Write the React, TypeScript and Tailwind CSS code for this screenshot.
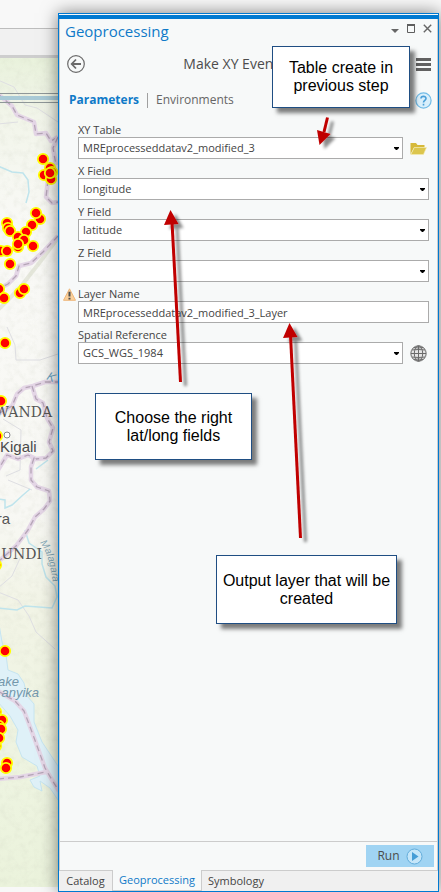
import type { ReactNode } from "react";

const TOOL_FONT = "font-['Open_Sans','Noto_Sans',sans-serif]";
const NOTE_FONT = "font-['Liberation_Sans',Arial,sans-serif]";
const SERIF_FONT = "font-['DejaVu_Serif',serif]";

const SITES: [number, number][] = [
  [43, 159], [50, 168], [44, 175], [51, 179], [52, 172], [50, 173],
  [40, 219], [36, 213], [32, 225], [7, 223], [8, 228], [10, 231], [26, 232],
  [18, 237], [24, 240], [18, 247], [18, 244], [1, 251], [7, 251], [33, 246], [10, 264],
  [-1, 289], [20, 293], [24, 289], [4, 298], [5, 343], [1, 401], [-3, 436],
  [-4, 565], [5, 651], [-4, 712], [2, 720], [-1, 726], [1, 729], [-1, 738], [-4, 746],
  [7, 763], [6, 768],
];

const BORDER_PATHS = [
  "M-2 94 L12 106 L17 115 L34 122 L36 134 L46 133 L51 141 L58 137",
  "M58 137 L53 148 L56 165 M48 180 L46 197 L52 203 L58 202",
  "M58 236 L43 252 L31 263 L19 266 L16 276 L8 284 L-2 289",
  "M-2 414 L12 406 L17 394 L24 388 L33 386 L45 382 L58 382",
  "M32 386 L36 399 L43 403 L47 418 L53 428 L49 442 L53 451 L46 458 L36 459 L28 455 L18 459 L7 455 L-2 470",
  "M34 458 L31 467 L31 480 L37 487 L49 491 L50 501 L44 509 L35 517 L28 530 L16 546 L-2 562",
  "M-2 691 L15 701 L24 711 L29 724 L36 743 L45 768 L52 780 L59 791 M-2 779 L20 777 L46 772",
];

const RIVER_PATHS = [
  "M-2 166 L12 172 L23 173 L28 180 L29 192 L26 203",
  "M-2 499 L5 500 L5 508 L12 505 L23 495 L30 489",
  "M36 469 L44 463 L48 460",
  "M25 530 L29 543 L42 552 L42 564 L46 577 L55 586 L57 597 L52 608 L25 606 L17 610 L-2 608",
];

function TerrainMap() {
  return (
    <svg
      className="block w-full flex-1 min-h-0"
      viewBox="0 58 58 829"
      preserveAspectRatio="xMinYMin slice"
      role="img"
      aria-label="Map of survey sites"
    >
      <defs>
        <linearGradient id="land" x1="0" y1="0" x2="0" y2="1">
          <stop offset="0" stopColor="#e9f2dc" />
          <stop offset="0.07" stopColor="#f2f5ea" />
          <stop offset="0.2" stopColor="#f9f9f6" />
          <stop offset="0.55" stopColor="#f8f8f4" />
          <stop offset="0.66" stopColor="#f2f4e6" />
          <stop offset="0.84" stopColor="#eef4e1" />
          <stop offset="1" stopColor="#ebf3dc" />
        </linearGradient>
        <filter id="relief" x="0" y="0" width="1" height="1">
          <feTurbulence type="fractalNoise" baseFrequency="0.14" numOctaves="4" seed="7" />
          <feColorMatrix values="0 0 0 0 0.55  0 0 0 0 0.57  0 0 0 0 0.47  0.9 0 0 0 -0.38" />
        </filter>
      </defs>
      <rect y="58" width="58" height="829" fill="url(#land)" />
      <path d="M-2 310 L8 300 L22 285 L40 262 L58 238" stroke="#d8dccb" strokeWidth="4" fill="none" opacity="0.6" />
      <rect y="58" width="58" height="829" filter="url(#relief)" opacity="0.4" />
      <path
        d="M-2 618 L2 642 L6 655 L8 670 L18 674 L24 683 L27 696 L34 704 L34 722 L42 742 L58 766 V800 L50 788 L40 781 L42 791 L34 787 L30 780 L40 776 L37 766 L22 757 L16 742 L18 730 L10 716 L-2 702 Z"
        fill="#dff1f8"
        stroke="#c6e5f1"
      />
      <path d="M-2 80 L14 87 L25 105 L37 108 L58 122 M-2 124 L18 122 M7 327 L15 345 L16 360 L40 360 L58 354 M3 419 L21 430 L20 470 L6 476 M32 490 L8 480 M-2 588 L12 576 L22 554 M-2 592 L18 600 L29 616 L36 632 L55 649" fill="none" stroke="#dedee2" />
      {RIVER_PATHS.map((d) => (
        <path key={d} d={d} fill="none" stroke="#bfe4ec" strokeWidth="1.5" />
      ))}
      {BORDER_PATHS.map((d) => (
        <g key={d} fill="none" strokeLinejoin="round">
          <path d={d} stroke="#e4d6e6" strokeWidth="4.500" />
          <path d={d} stroke="#b5a5b7" strokeWidth="1.300" strokeDasharray="6 4" />
        </g>
      ))}
      <path d="M0 93.500H58 M0 102.500H58" stroke="#8f9798" />
      <path d="M0 98H58" stroke="#a9cad6" strokeWidth="4" />
      <text x="52" y="417" textAnchor="end" fontSize="14" fill="#555555" className={SERIF_FONT}>WANDA</text>
      <text x="0" y="452" fontSize="15" fill="#4a4a4a" className={NOTE_FONT}>Kigali</text>
      <circle cx="7" cy="435" r="3" fill="#ffffff" stroke="#888888" />
      <text x="10" y="524" textAnchor="end" fontSize="15" fill="#555555" className={NOTE_FONT}>ra</text>
      <text x="42" y="559" textAnchor="end" fontSize="14" fill="#555555" className={SERIF_FONT}>UNDI</text>
      <text x="19" y="686" textAnchor="end" fontSize="13" fontStyle="italic" fill="#7397ab" className={NOTE_FONT}>ake</text>
      <text x="39" y="697" textAnchor="end" fontSize="13" fontStyle="italic" fill="#7397ab" className={NOTE_FONT}>anyika</text>
      <text x="46" y="379" fontSize="12" fontStyle="italic" fill="#6ba3c2" transform="rotate(25 46 379)" className={NOTE_FONT}>K</text>
      <path id="malagarasi" d="M40 543 Q50 554 54 592" fill="none" />
      <text fontSize="10" fontStyle="italic" fill="#86a9b8" className={NOTE_FONT}>
        <textPath href="#malagarasi">Malagara</textPath>
      </text>
      {SITES.map(([x, y], i) => (
        <circle key={i} cx={x} cy={y} r="5.200" fill="#ff0000" stroke="#ffff00" strokeWidth="1.800" />
      ))}
    </svg>
  );
}

type FieldProps = {
  id: string;
  label: string;
  value: string;
  text?: boolean;
  warning?: boolean;
  action?: ReactNode;
};

function Field({ id, label, value, text, warning, action }: FieldProps) {
  const box = "block h-[22px] w-full appearance-none rounded-none border border-[#ababab] bg-white px-1 text-[11px] leading-[18px] text-[#444444] outline-none";
  return (
    <div className="grid grid-cols-[16px_1fr] gap-x-px">
      <div className="flex items-end pl-0.5">
        {warning && (
          <svg width="13" height="13" viewBox="0 0 13 13" aria-label="Warning">
            <path d="M6.500 0.800 L12.500 12.300 H0.500 Z" fill="#fbd09b" stroke="#eeb77c" strokeLinejoin="round" />
            <path d="M6.500 3.800V8.400M6.500 9.700V11.400" stroke="#4d4d4d" strokeWidth="2" />
          </svg>
        )}
      </div>
      <label htmlFor={id} className="flex h-[19px] items-end text-[11px] leading-[15px] text-[#444444]">{label}</label>
      <div className="col-start-2 flex h-[22px] items-center">
        <div className="relative flex-1">
          {text ? (
            <input id={id} type="text" defaultValue={value} className={box} />
          ) : (
            <>
              <select id={id} defaultValue={value} className={box}>
                <option value={value}>{value}</option>
              </select>
              <svg className="pointer-events-none absolute right-1 top-[10px]" width="5" height="3" viewBox="0 0 5 3" aria-hidden="true">
                <path d="M0 0H5V1L3 3H2L0 1Z" fill="#000000" />
              </svg>
            </>
          )}
        </div>
        {action}
      </div>
    </div>
  );
}

function Note({ className, children }: { className: string; children: ReactNode }) {
  return (
    <div className={`absolute flex items-center justify-center border border-[#1f4e83] bg-white text-center text-[16px] leading-[18px] text-black shadow-[5px_5px_4px_rgba(0,0,0,0.5)] ${NOTE_FONT} ${className}`}>
      <p>{children}</p>
    </div>
  );
}

function Arrows() {
  return (
    <svg className="pointer-events-none absolute left-0 top-0" width="441" height="560" viewBox="0 0 441 560" aria-hidden="true">
      <defs>
        <filter id="arrowShadow" x="-100%" y="-20%" width="400%" height="150%">
          <feDropShadow dx="5" dy="4" stdDeviation="1.500" floodColor="#000000" floodOpacity="0.45" />
        </filter>
      </defs>
      <g fill="#c00000" stroke="#c00000" filter="url(#arrowShadow)">
        <path d="M327.500 117.500L324 132" strokeWidth="3" />
        <path d="M319.500 145L317 130L330.500 134Z" stroke="none" />
      </g>
      <g fill="#c00000" stroke="#c00000" filter="url(#arrowShadow)">
        <path d="M180.500 382L172 222" strokeWidth="3" />
        <path d="M170.500 210L164 225L178.500 224Z" stroke="none" />
      </g>
      <g fill="#c00000" stroke="#c00000" filter="url(#arrowShadow)">
        <path d="M300.500 538L290.500 335" strokeWidth="3" />
        <path d="M289.500 323L283 338L297.500 337Z" stroke="none" />
      </g>
    </svg>
  );
}

export default function App() {
  return (
    <div className={`relative flex min-h-screen w-full overflow-hidden bg-[#f8f8f8] ${TOOL_FONT}`}>
      <aside className="flex w-[58px] shrink-0 flex-col">
        <div className="h-7 shrink-0" />
        <div className="h-[27px] shrink-0 border-t border-[#bdbdbd] bg-[#f1f1f1]" />
        <div className="h-[3px] shrink-0 bg-[#cecece]" />
        <TerrainMap />
        <div className="h-[5px] shrink-0" />
      </aside>

      <main className="relative mr-[2px] mt-[13px] flex min-w-0 flex-1 flex-col border border-[#0079d1] bg-[#f7f9f9] pt-px shadow-[0_0_16px_rgba(0,0,0,0.5)]">
        <div className="h-1 shrink-0 bg-[#0079d1]" />
        <div className="flex flex-1 flex-col border-x border-[#cccccc]">
          <header className="flex h-[23px] items-center justify-between pl-[5px] pr-[5px]">
            <h1 className="text-[15px] leading-5 text-[#0f7ac8]">Geoprocessing</h1>
            <div className="flex items-center gap-2 pb-1">
              <button type="button" aria-label="Pane options" className="pt-1">
                <svg width="8" height="4" viewBox="0 0 8 4"><path d="M0 0H8L4 4Z" fill="#666666" /></svg>
              </button>
              <button type="button" aria-label="Maximize">
                <svg width="8" height="9" viewBox="0 0 8 9"><path d="M0.500 1V8.500H7.500V1" fill="none" stroke="#5e5e5e" /><path d="M0 1H8" stroke="#5e5e5e" strokeWidth="2" /></svg>
              </button>
              <button type="button" aria-label="Close">
                <svg width="9" height="9" viewBox="0 0 9 9"><path d="M0.800 0.800L8.200 8.200M8.200 0.800L0.800 8.200" stroke="#666666" strokeWidth="1.400" /></svg>
              </button>
            </div>
          </header>

          <div className="flex h-11 items-center justify-between pl-[7px] pr-1.5">
            <button type="button" aria-label="Back">
              <svg width="18" height="18" viewBox="0 0 18 18" fill="none" stroke="#6a6a6a">
                <circle cx="9" cy="9" r="8.300" strokeWidth="1.200" />
                <path d="M14 9H5" strokeWidth="2" />
                <path d="M9 4.500L4.700 9L9 13.500" strokeWidth="1.800" />
              </svg>
            </button>
            <h2 className="text-[14px] leading-5 text-[#4c4c4c]">Make XY Event Layer</h2>
            <button type="button" aria-label="Menu">
              <svg width="15" height="13" viewBox="0 0 15 13"><path d="M0 1.500H15M0 6.500H15M0 11.500H15" stroke="#616161" strokeWidth="3" /></svg>
            </button>
          </div>

          <div className="flex h-7 items-center justify-between pl-[9px] pr-[5px]">
            <nav className="flex items-center text-[12px] leading-5">
              <button type="button" className="font-bold text-[#0f7ac8]">Parameters</button>
              <span className="ml-2 mr-2 h-[15px] w-px bg-[#a0a0a0]" />
              <button type="button" className="text-[#666666]">Environments</button>
            </nav>
            <button type="button" aria-label="Help">
              <svg width="17" height="17" viewBox="0 0 17 17" fill="none">
                <circle cx="8.500" cy="8.500" r="7.600" fill="#d9effb" stroke="#72bbe6" strokeWidth="1.200" />
                <path d="M6 6.600C6 3.700 11 3.700 11 6.500C11 8.300 8.500 8.300 8.500 10.500M8.500 11.700V13.500" stroke="#4a9fd8" strokeWidth="1.600" />
              </svg>
            </button>
          </div>

          <form className="flex flex-1 flex-col pl-[1px] pr-2 pt-1" onSubmit={(e) => e.preventDefault()}>
            <Field
              id="xy-table"
              label="XY Table"
              value="MREprocesseddatav2_modified_3"
              action={
                <button type="button" aria-label="Browse" className="ml-[7px] mr-[2px]">
                  <svg width="17" height="13" viewBox="0 0 17 13">
                    <path d="M0.500 12.500V1H6L7.500 3H14.500V5.500H4L0.500 12.500Z" fill="#d6b93a" />
                    <path d="M4.300 5.500H16.500L13.500 12.500H0.800Z" fill="#dcc64d" stroke="#f5edb5" strokeWidth="0.600" />
                  </svg>
                </button>
              }
            />
            <Field id="x-field" label="X Field" value="longitude" />
            <Field id="y-field" label="Y Field" value="latitude" />
            <Field id="z-field" label="Z Field" value="" />
            <Field id="layer-name" label="Layer Name" value="MREprocesseddatav2_modified_3_Layer" text warning />
            <Field
              id="spatial-reference"
              label="Spatial Reference"
              value="GCS_WGS_1984"
              action={
                <button type="button" aria-label="Select coordinate system" className="ml-[7px] mr-[2px]">
                  <svg width="17" height="17" viewBox="0 0 17 17" fill="none" stroke="#6a6a6a">
                    <circle cx="8.500" cy="8.500" r="7.700" fill="#e4e4e4" />
                    <ellipse cx="8.500" cy="8.500" rx="4.200" ry="7.700" />
                    <path d="M8.500 1V16M1 8.500H16M2 5Q8.500 4 15 5M2 12Q8.500 13 15 12M4 2.500Q8.500 3.500 13 2.500M4 14.500Q8.500 13.500 13 14.500" />
                  </svg>
                </button>
              }
            />
          </form>

          <footer className="flex h-[29px] items-center justify-end border-t border-[#cccccc] pr-[3px]">
            <button type="button" className="flex h-[22px] w-[68px] items-center justify-center gap-1.5 bg-[#a0d4f3] text-[12px] text-[#4c4c4c]">
              Run
              <svg width="17" height="17" viewBox="0 0 17 17">
                <circle cx="8.500" cy="8.500" r="7.500" fill="#c5e6f9" stroke="#63addb" />
                <path d="M6 4V13L12.500 8.500Z" fill="#469dd6" />
              </svg>
            </button>
          </footer>
        </div>
        <nav className="flex h-[21px] shrink-0 bg-[#f0f0f0] text-[11px] leading-[18px] text-[#444444]">
          <button type="button" className="w-[53px] border-t border-[#cccccc]">Catalog</button>
          <button type="button" className="w-[90px] border-x border-b border-[#cccccc] bg-[#f7f9f9] text-[#0f7ac8]">Geoprocessing</button>
          <button type="button" className="flex-1 border-t border-[#cccccc] pl-1.5 text-left">Symbology</button>
        </nav>
      </main>

      <Arrows />
      <Note className="left-[272px] top-[46px] h-[62px] w-[138px]">Table create in<br />previous step</Note>
      <Note className="left-[95px] top-[393px] h-[67px] w-[157px]">Choose the right<br />lat/long fields</Note>
      <Note className="left-[216px] top-[555px] h-[69px] w-[181px]">Output layer that will be created</Note>
    </div>
  );
}
